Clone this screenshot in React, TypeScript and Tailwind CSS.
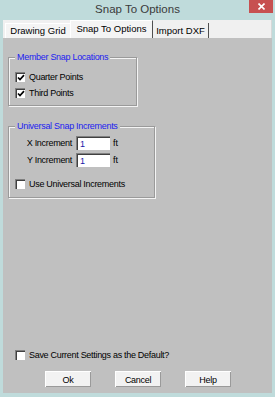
import React from "react";

const ui = { fontFamily: '"Liberation Sans", Arial, sans-serif' };

function Check({ checked }: { checked?: boolean }) {
  return (
    <div className="w-[10px] h-[10px] shrink-0 bg-white border-t border-l border-[#808080] border-b-white border-r-white shadow-[inset_1px_1px_0_#404040] flex items-center justify-center">
      {checked && (
        <svg width="8" height="8" viewBox="0 0 8 8">
          <path d="M1 3.5 L3 5.5 L7 1.2" stroke="#000" strokeWidth="1.7" fill="none" />
        </svg>
      )}
    </div>
  );
}

function CheckRow({ label, checked, className = "" }: { label: string; checked?: boolean; className?: string }) {
  return (
    <div className={`flex items-center h-[12px] gap-[4px] ${className}`}>
      <Check checked={checked} />
      <span className="text-[9px] leading-[12px] tracking-[-0.3px] text-black">{label}</span>
    </div>
  );
}

function Group({ title, className = "", children }: { title: string; className?: string; children: React.ReactNode }) {
  return (
    <div className={`border border-[#9a9a9a] shadow-[inset_1px_1px_0_#f4f4f4,1px_1px_0_#f4f4f4] flex flex-col ${className}`}>
      <div className="-mt-[7px] ml-[6px] px-[2px] w-fit bg-[#c0c0c0] text-[9px] leading-[12px] tracking-[-0.3px] text-[#1c1cf0]">
        {title}
      </div>
      {children}
    </div>
  );
}

function IncRow({ label, className = "" }: { label: string; className?: string }) {
  return (
    <div className={`flex items-center h-[14px] ${className}`}>
      <span className="w-[63px] text-right text-[9px] leading-[12px] tracking-[-0.3px] text-black">{label}</span>
      <div className="ml-[4px] w-[34px] h-[14px] bg-white border-t border-l border-[#808080] border-b-white border-r-white shadow-[inset_1px_1px_0_#404040] flex items-center pl-[3px]">
        <span className="text-[9px] leading-[12px] text-[#1a1aa8]">1</span>
      </div>
      <span className="ml-[3px] text-[9px] leading-[12px] text-black">ft</span>
    </div>
  );
}

function Btn({ label }: { label: string }) {
  return (
    <button
      type="button"
      className="w-[46px] h-[16px] bg-[#f2f2f2] border-t border-l border-white border-b-[#3c3c3c] border-r-[#3c3c3c] shadow-[inset_-1px_-1px_0_#9a9a9a] text-[9px] leading-[12px] tracking-[-0.3px] text-black flex items-center justify-center"
    >
      {label}
    </button>
  );
}

export default function App() {
  return (
    <div className="w-[275px] h-[397px] bg-[#bfdbdb] flex flex-col overflow-hidden" style={ui}>
      <div className="relative h-[20px] shrink-0 flex items-center justify-center">
        <span className="text-[11.5px] leading-[14px] text-[#3a3a3a] -mt-[3px]">Snap To Options</span>
        <div className="absolute right-[2px] top-0 w-[24px] h-[13px] bg-[#c75050] flex items-center justify-center">
          <svg width="7" height="7" viewBox="0 0 7 7">
            <path d="M0.5 0.5 L6.5 6.5 M6.5 0.5 L0.5 6.5" stroke="#fff" strokeWidth="1.6" />
          </svg>
        </div>
      </div>

      <div className="flex-1 mx-[3px] mb-[4px] flex flex-col">
        <div className="h-[18px] shrink-0 bg-[#f0f0f0] border-r border-[#d8d8d8] flex items-end pl-[2px] text-[9.5px] leading-[12px] text-black">
          <div className="h-[15px] w-[65px] border-t border-l border-white bg-[#f4f4f4] flex items-center justify-center">Drawing Grid</div>
          <div className="h-[18px] w-[83px] border-t border-l border-white border-r border-r-[#505050] bg-[#f4f4f4] flex items-start pt-[2px] justify-center">
            Snap To Options
          </div>
          <div className="h-[15px] w-[56px] border-r border-[#505050] flex items-center justify-center">Import DXF</div>
        </div>

        <div className="flex-1 bg-[#c0c0c0] flex flex-col pl-[5px]">
          <Group title="Member Snap Locations" className="mt-[19px] w-[129px] h-[49px]">
            <CheckRow label="Quarter Points" checked className="ml-[6px] mt-[8px]" />
            <CheckRow label="Third Points" checked className="ml-[6px] mt-[4px]" />
          </Group>

          <Group title="Universal Snap Increments" className="mt-[20px] w-[147px] h-[72px]">
            <IncRow label="X Increment" className="mt-[4px]" />
            <IncRow label="Y Increment" className="mt-[3px]" />
            <CheckRow label="Use Universal Increments" className="ml-[6px] mt-[11px]" />
          </Group>

          <div className="flex-1" />

          <CheckRow label="Save Current Settings as the Default?" className="ml-[7px]" />
          <div className="flex justify-center gap-[24px] mt-[10px] mb-[6px] -ml-[5px]">
            <Btn label="Ok" />
            <Btn label="Cancel" />
            <Btn label="Help" />
          </div>
        </div>
      </div>
    </div>
  );
}
